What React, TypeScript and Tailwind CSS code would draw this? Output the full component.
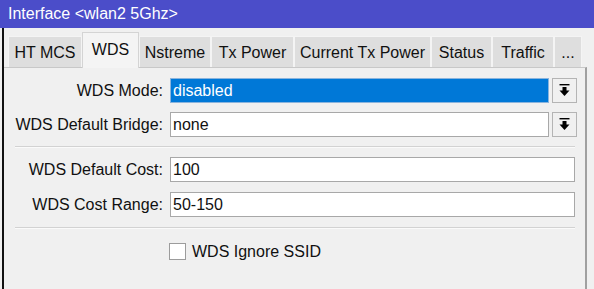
import React from "react";

const tabs = [
  { label: "HT MCS", w: "w-[74px]" },
  { label: "WDS", w: "w-[57px]", active: true },
  { label: "Nstreme", w: "w-[72px]" },
  { label: "Tx Power", w: "w-[83px]" },
  { label: "Current Tx Power", w: "w-[137px]" },
  { label: "Status", w: "w-[61px]" },
  { label: "Traffic", w: "w-[62px]" },
  { label: "...", w: "w-[28px]" },
];

function DropIcon() {
  return (
    <svg width="11" height="13" viewBox="0 0 11 13">
      <rect x="0.5" y="0" width="10" height="1.4" fill="#000" />
      <rect x="3.5" y="3" width="4" height="4" fill="#000" />
      <polygon points="0.5,6.5 10.5,6.5 5.5,12" fill="#000" />
    </svg>
  );
}

function Label({ children }: { children: React.ReactNode }) {
  return (
    <div className="w-[160px] shrink-0 text-right pr-[1px] text-[16px] leading-[25px] text-[#111]">
      {children}
    </div>
  );
}

export default function App() {
  return (
    <div
      className="w-[594px] h-[289px] bg-[#f0f0f0] overflow-hidden flex flex-col"
      style={{ fontFamily: '"Liberation Sans", Arial, sans-serif' }}
    >
      <div className="h-[28px] shrink-0 bg-[#4b4dc9] text-white text-[16px] pl-[8px] flex items-center">
        Interface &lt;wlan2 5Ghz&gt;
      </div>
      <div className="flex-1 flex pl-[2px]">
        <div className="flex-1 flex flex-col border-l-2 border-[#111]">
          <div className="h-[39px] flex items-end pl-[4px] pt-[3px]">
            {tabs.map((t) =>
              t.active ? (
                <div
                  key={t.label}
                  className={`${t.w} h-[36px] bg-[#f4f4f4] border border-b-0 border-[#d4d4d4] flex items-center justify-center text-[16px] text-[#111] pb-[1px] relative z-10 -mb-[1px]`}
                >
                  {t.label}
                </div>
              ) : (
                <div
                  key={t.label}
                  className={`${t.w} h-[31px] bg-[#dedede] border-l border-t border-r border-[#f4f4f4] flex items-center justify-center text-[16px] text-[#111] pt-[2px]`}
                >
                  {t.label}
                </div>
              )
            )}
          </div>
          <div className="flex-1 w-[583px] border-t border-r-2 border-[#c8c8c8] border-r-[#a0a0a0] bg-[#f0f0f0] pt-[10px]">
            <div className="flex items-center h-[25px]">
              <Label>WDS Mode:</Label>
              <div className="ml-[6px] w-[379px] h-[25px] bg-[#0078d7] border border-[#8ab4dd] text-white text-[16px] leading-[23px] pl-[2px]">
                disabled
              </div>
              <div className="ml-[3px] w-[25px] h-[25px] bg-[#f0f0f0] border border-[#b4b4b4] flex items-center justify-center">
                <DropIcon />
              </div>
            </div>
            <div className="flex items-center h-[25px] mt-[9px]">
              <Label>WDS Default Bridge:</Label>
              <div className="ml-[6px] w-[379px] h-[25px] bg-white border border-[#a8a8a8] text-[#111] text-[16px] leading-[23px] pl-[2px]">
                none
              </div>
              <div className="ml-[3px] w-[25px] h-[25px] bg-[#f0f0f0] border border-[#b4b4b4] flex items-center justify-center">
                <DropIcon />
              </div>
            </div>
            <div className="ml-[11px] w-[560px] h-[2px] border-t border-[#d2d2d2] border-b border-b-[#fafafa] mt-[9px]" />
            <div className="flex items-center h-[25px] mt-[9px]">
              <Label>WDS Default Cost:</Label>
              <div className="ml-[6px] w-[405px] h-[25px] bg-white border border-[#a8a8a8] text-[#111] text-[16px] leading-[23px] pl-[2px]">
                100
              </div>
            </div>
            <div className="flex items-center h-[25px] mt-[10px]">
              <Label>WDS Cost Range:</Label>
              <div className="ml-[6px] w-[405px] h-[25px] bg-white border border-[#a8a8a8] text-[#111] text-[16px] leading-[23px] pl-[2px]">
                50-150
              </div>
            </div>
            <div className="ml-[11px] w-[560px] h-[2px] border-t border-[#d2d2d2] border-b border-b-[#fafafa] mt-[10px]" />
            <div className="flex items-center h-[17px] mt-[14px] pl-[165px]">
              <div className="w-[17px] h-[17px] bg-white border border-[#9c9c9c]" />
              <span className="ml-[6px] text-[16px] text-[#111]">WDS Ignore SSID</span>
            </div>
          </div>
        </div>
      </div>
    </div>
  );
}
